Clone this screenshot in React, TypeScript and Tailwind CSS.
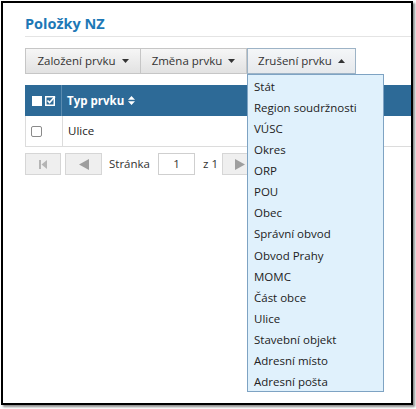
import React from "react";

const Caret = ({ up = false }: { up?: boolean }) => (
  <svg width="7" height="4" viewBox="0 0 7 4" className="ml-[6px]">
    {up ? <path d="M0 4 L3.5 0 L7 4 Z" fill="#333" /> : <path d="M0 0 L7 0 L3.5 4 Z" fill="#333" />}
  </svg>
);

const items = [
  "Stát",
  "Region soudržnosti",
  "VÚSC",
  "Okres",
  "ORP",
  "POU",
  "Obec",
  "Správní obvod",
  "Obvod Prahy",
  "MOMC",
  "Část obce",
  "Ulice",
  "Stavební objekt",
  "Adresní místo",
  "Adresní pošta",
];

export default function App() {
  return (
    <div className="w-[416px] h-[409px] bg-white overflow-hidden" style={{ fontFamily: '"Open Sans", "Noto Sans", sans-serif' }}>
      <div className="ml-[1px] mt-[1px] w-[412px] h-[404px] border-2 border-black shadow-[2px_2px_2px_rgba(0,0,0,0.45)] pl-[22px] overflow-hidden">
        <div className="pt-[11px] pb-[3px] border-b border-[#e4e4e4] text-[14.5px] leading-[19px] font-bold text-[#1d78b6]">
          Položky NZ
        </div>
        <div className="mt-[11px] flex h-[26px] text-[11.5px] text-[#333]">
          <div className="w-[116px] flex items-center justify-center border border-[#c6c6c6] bg-gradient-to-b from-[#f6f6f6] to-[#e2e2e2]">
            Založení prvku
            <Caret />
          </div>
          <div className="w-[106px] flex items-center justify-center border border-l-0 border-[#c6c6c6] bg-gradient-to-b from-[#f6f6f6] to-[#e2e2e2]">
            Změna prvku
            <Caret />
          </div>
          <div className="relative w-[109px]">
            <div className="h-full flex items-center justify-center border border-[#9db3c6] bg-gradient-to-b from-[#f4f6f8] to-[#e6e9ec]">
              Zrušení prvku
              <Caret up />
            </div>
            <div className="absolute left-0 top-full w-[137px] h-[318px] z-10 bg-[#e0f1fc] border border-[#7ea3c3] py-[1px] text-[11.5px] text-[#222]">
              {items.map((t) => (
                <div key={t} className="h-[21.07px] leading-[21px] pl-[6px]">
                  {t}
                </div>
              ))}
            </div>
          </div>
        </div>
        <div className="mt-[11px]">
          <div className="flex h-[31px] bg-[#2d6a97] text-white text-[11.5px] font-bold">
            <div className="w-[37px] flex items-center pl-[7px] border-r border-[#5a8bb0]">
              <div className="w-[10px] h-[10px] bg-white" />
              <svg width="11" height="11" viewBox="0 0 11 11" className="ml-[3px]">
                <rect x="0.75" y="1.75" width="8.5" height="8.5" fill="none" stroke="white" strokeWidth="1.5" />
                <path d="M2.5 5.5 L4.6 7.6 L10 1.5" fill="none" stroke="white" strokeWidth="1.6" />
              </svg>
            </div>
            <div className="flex items-center pl-[5px]">
              Typ prvku
              <svg width="7" height="9" viewBox="0 0 7 9" className="ml-[4px]">
                <path d="M0 3.8 L3.5 0 L7 3.8 Z M0 5.2 L7 5.2 L3.5 9 Z" fill="white" />
              </svg>
            </div>
          </div>
          <div className="flex h-[31px] border-l border-b border-[#dcdcdc] text-[11.5px] text-[#222]">
            <div className="w-[37px] flex items-center pl-[5px] border-r border-[#dcdcdc]">
              <div className="w-[11px] h-[11px] rounded-[2px] border border-[#8a8a8a] bg-white" />
            </div>
            <div className="flex items-center pl-[5px]">Ulice</div>
          </div>
        </div>
        <div className="mt-[6px] flex items-center h-[22px] text-[11.5px] text-[#333]">
          <div className="w-[36px] h-full flex items-center justify-center bg-[#efefef] border border-[#d6d6d6]">
            <svg width="8" height="9" viewBox="0 0 8 9">
              <rect x="0" y="0" width="2" height="9" fill="#b5b5b5" />
              <path d="M8 0 L2.5 4.5 L8 9 Z" fill="#b5b5b5" />
            </svg>
          </div>
          <div className="ml-[4px] w-[37px] h-full flex items-center justify-center bg-[#efefef] border border-[#d6d6d6]">
            <svg width="10" height="11" viewBox="0 0 10 11">
              <path d="M10 0 L0 5.5 L10 11 Z" fill="#9e9e9e" />
            </svg>
          </div>
          <div className="ml-[7px] w-[43px]">Stránka</div>
          <div className="ml-[6px] w-[37px] h-full flex items-center justify-center border border-[#cfcfcf] bg-white">1</div>
          <div className="ml-[8px] w-[16px]">z 1</div>
          <div className="ml-[3px] w-[36px] h-full flex items-center justify-center bg-[#efefef] border border-[#d6d6d6]">
            <svg width="10" height="11" viewBox="0 0 10 11">
              <path d="M0 0 L10 5.5 L0 11 Z" fill="#9e9e9e" />
            </svg>
          </div>
        </div>
      </div>
    </div>
  );
}
